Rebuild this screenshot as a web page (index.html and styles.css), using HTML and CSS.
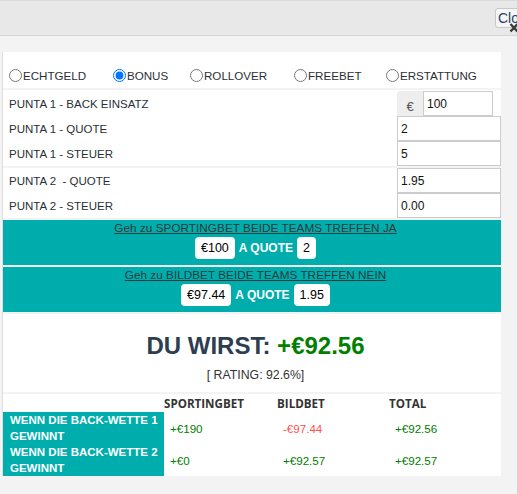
FILE: index.html
```html
<!DOCTYPE html>
<html lang="de">
<head>
<meta charset="utf-8">
<title>Rechner</title>
<link rel="stylesheet" href="styles.css">
</head>
<body>
<div class="topbar">
  <button class="close-btn" type="button">Close</button>
  <span class="close-x"><svg width="10" height="11" viewBox="0 0 10 11"><path d="M1.5 2 L8.5 9.5 M8.5 2 L1.5 9.5" stroke="#3a3a3a" stroke-width="2.4" fill="none"/></svg></span>
</div>
<div class="panel">
  <div class="radios">
    <label class="opt"><input type="radio" name="mode">ECHTGELD</label>
    <label class="opt"><input type="radio" name="mode" checked>BONUS</label>
    <label class="opt"><input type="radio" name="mode">ROLLOVER</label>
    <label class="opt"><input type="radio" name="mode">FREEBET</label>
    <label class="opt"><input type="radio" name="mode">ERSTATTUNG</label>
  </div>
  <div class="group group-first">
    <div class="row">
      <span class="lbl">PUNTA 1 - BACK EINSATZ</span>
      <div class="addon-wrap"><span class="addon">€</span><input class="field field-short" type="text" value="100"></div>
    </div>
    <div class="row">
      <span class="lbl">PUNTA 1 - QUOTE</span>
      <input class="field" type="text" value="2">
    </div>
    <div class="row">
      <span class="lbl">PUNTA 1 - STEUER</span>
      <input class="field" type="text" value="5">
    </div>
  </div>
  <div class="group">
    <div class="row">
      <span class="lbl">PUNTA 2&nbsp; - QUOTE</span>
      <input class="field" type="text" value="1.95">
    </div>
    <div class="row">
      <span class="lbl">PUNTA 2 - STEUER</span>
      <input class="field" type="text" value="0.00">
    </div>
  </div>
  <div class="bet">
    <a class="bet-link" href="#">Geh zu SPORTINGBET BEIDE TEAMS TREFFEN JA</a>
    <div class="badges"><span class="badge">€100</span><span class="at">A QUOTE</span><span class="badge">2</span></div>
  </div>
  <div class="bet">
    <a class="bet-link" href="#">Geh zu BILDBET BEIDE TEAMS TREFFEN NEIN</a>
    <div class="badges"><span class="badge">€97.44</span><span class="at">A QUOTE</span><span class="badge">1.95</span></div>
  </div>
  <div class="result">
    <h2 class="result-title">DU WIRST: <span class="pos">+€92.56</span></h2>
    <div class="rating">[ RATING: 92.6%]</div>
  </div>
  <div class="tbl">
    <div class="th"></div>
    <div class="th">SPORTINGBET</div>
    <div class="th">BILDBET</div>
    <div class="th">TOTAL</div>
    <div class="case">WENN DIE BACK-WETTE 1 GEWINNT</div>
    <div class="val pos">+€190</div>
    <div class="val neg">-€97.44</div>
    <div class="val pos">+€92.56</div>
    <div class="case">WENN DIE BACK-WETTE 2 GEWINNT</div>
    <div class="val pos">+€0</div>
    <div class="val pos">+€92.57</div>
    <div class="val pos">+€92.57</div>
  </div>
</div>
</body>
</html>
```
FILE: styles.css
```css
body {
  margin: 0;
  background: #f2f3f2;
  font-family: "Liberation Sans", Arial, sans-serif;
  font-size: 12px;
  color: #333;
}

.topbar {
  position: relative;
  height: 34px;
  border-top: 1px solid #dcdcdc;
  border-bottom: 1px solid #d6d6d6;
  background: #e8e8e8;
  display: flex;
  justify-content: flex-end;
  align-items: flex-start;
  overflow: hidden;
}

.close-btn {
  margin: 7px -24px 0 0;
  width: 46px;
  height: 20px;
  padding: 0 0 0 2px;
  text-align: left;
  border: 1px solid #c8c8c8;
  border-radius: 3px;
  background: #f6f6f6;
  font-family: "Liberation Sans", Arial, sans-serif;
  font-size: 14px;
  color: #2b3f66;
}

.close-x {
  position: absolute;
  left: 509px;
  top: 21px;
  width: 10px;
  height: 11px;
  display: block;
}

.close-x svg { display: block; }

.panel {
  margin: 16px 0 0 2px;
  width: 498px;
  border-left: 1px solid #dedede;
  display: flex;
  flex-direction: column;
  gap: 2px;
}

.radios {
  background: #fff;
  height: 36px;
  box-sizing: border-box;
  padding: 0 0 6px 1px;
  display: grid;
  grid-template-columns: 104px 77px 104px 92px auto;
  align-items: end;
}

.opt {
  display: flex;
  align-items: center;
  height: 14px;
  font-size: 11.6px;
  color: #2a2f36;
  white-space: nowrap;
}

.opt input {
  margin: 0 1px 0 5px;
  width: 13px;
  height: 13px;
}

.group {
  background: #fff;
}

.group-first {
  padding-top: 1px;
}

.row {
  display: grid;
  grid-template-columns: 1fr 104px;
  height: 25px;
  align-items: center;
}

.lbl {
  padding-left: 6px;
  font-size: 11.5px;
  color: #2a2f36;
}

.field {
  box-sizing: border-box;
  width: 104px;
  height: 25px;
  margin: 0;
  border: 1px solid #cccccc;
  padding: 0 3px;
  font-family: "Liberation Sans", Arial, sans-serif;
  font-size: 12px;
  color: #111;
  background: #fff;
}

.addon-wrap {
  display: flex;
}

.addon {
  width: 26px;
  height: 25px;
  box-sizing: border-box;
  padding-top: 8px;
  background: #eeeeee;
  border-radius: 4px 0 0 0;
  text-align: center;
  font-size: 13px;
  line-height: 15px;
  color: #555;
}

.field-short {
  width: 70px;
}

.bet {
  background: #00adad;
  height: 45px;
  box-sizing: border-box;
  padding-left: 7px;
  text-align: center;
}

.bet-link {
  display: block;
  line-height: 16px;
  font-size: 11.8px;
  color: #2f3a3a;
  text-decoration: underline;
}

.badges {
  margin-top: 1px;
  display: flex;
  justify-content: center;
  align-items: center;
  gap: 3px;
}

.badge {
  height: 22px;
  padding: 0 6px;
  display: flex;
  align-items: center;
  background: #fff;
  border-radius: 4px;
  font-size: 12.5px;
  color: #000;
}

.at {
  padding: 0 1px;
  font-weight: bold;
  font-size: 12px;
  color: #fff;
}

.result {
  background: #fff;
  height: 78px;
  box-sizing: border-box;
  padding: 18px 0 0 7px;
  text-align: center;
}

.result-title {
  margin: 0;
  font-size: 24px;
  line-height: 28px;
  font-weight: bold;
  color: #2c3e50;
}

.rating {
  margin-top: 8px;
  line-height: 14px;
  font-size: 12.3px;
  color: #333;
}

.tbl {
  background: #fff;
  display: grid;
  grid-template-columns: 161px 113px 112px 1fr;
  grid-template-rows: 18px 32px 32px;
}

.th {
  align-self: center;
  font-family: "Open Sans", sans-serif;
  font-weight: bold;
  font-size: 11.6px;
  color: #333;
}

.case {
  background: #00adad;
  color: #fff;
  font-weight: bold;
  font-size: 11.5px;
  line-height: 16px;
  padding-left: 7px;
}

.val {
  align-self: center;
  padding-left: 6px;
  font-size: 11.6px;
}

.pos { color: #008000; }
.neg { color: #ff5050; }
```
